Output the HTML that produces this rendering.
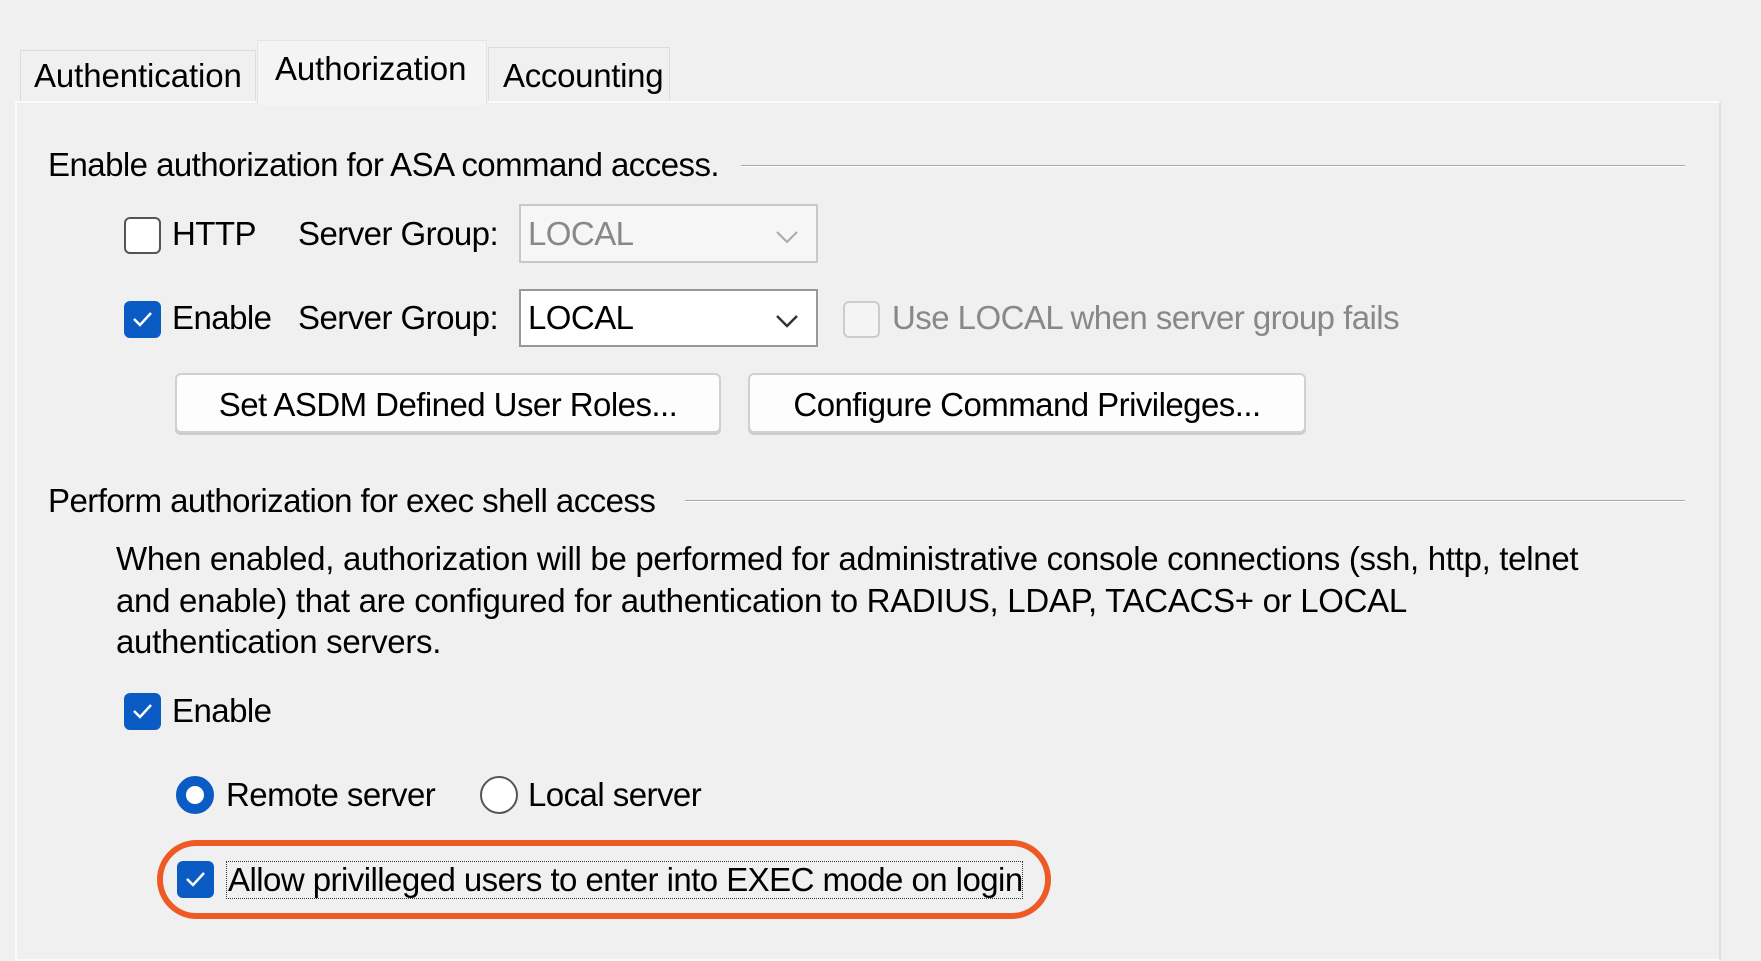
<!DOCTYPE html>
<html><head><meta charset="utf-8"><style>
*{margin:0;padding:0;box-sizing:border-box}
body{width:1761px;height:948px;background:#f0f0f0;position:relative;overflow:hidden;font-family:"Liberation Sans",sans-serif;font-size:33px;color:#000;letter-spacing:-0.55px}
.a{position:absolute;white-space:nowrap;line-height:1}
.tab{position:absolute;border:1px solid #dcdcdc;border-bottom:none;background:#f0f0f0}
.panel{position:absolute;left:15px;top:101px;width:1706px;height:860px;border:2px solid #fafafa;border-right-color:#e0e0e0;background:#f0f0f0}
.cb{position:absolute;width:37px;height:37px;border:2px solid #555;border-radius:6px;background:#fff}
.cbc{position:absolute;width:37px;height:37px;border-radius:6px;background:#0a5bc4}
.cbc svg{position:absolute;left:8px;top:9px}
.combo{position:absolute;border:2px solid #c8c8c8;background:#f6f6f6}
.btn{position:absolute;border:2px solid #d0d0d0;border-radius:6px;background:#fdfdfd;text-align:center;box-shadow:0 2px 0 #ccc}
.line{position:absolute;height:2px;background:#a8a8a8;border-bottom:1px solid #fff}
</style></head><body>
<div class="tab" style="left:20px;top:50px;width:236px;height:52px"></div>
<div class="tab" style="left:488px;top:47px;width:182px;height:55px"></div>
<div class="panel"></div>
<div class="tab" style="left:257px;top:40px;width:230px;height:65px;background:#f4f4f4;border-color:#e4e4e4"></div>
<div class="a" style="left:34px;top:59px;font-size:33px;letter-spacing:-0.1px">Authentication</div>
<div class="a" style="left:275px;top:52px;font-size:33px;letter-spacing:-0.1px">Authorization</div>
<div class="a" style="left:503px;top:59px;font-size:33px;letter-spacing:-0.3px">Accounting</div>

<div class="a" style="left:48px;top:148px">Enable authorization for ASA command access.</div>
<div class="line" style="left:741px;top:165px;width:944px"></div>

<div class="cb" style="left:124px;top:217px"></div>
<div class="a" style="left:172px;top:217px">HTTP</div>
<div class="a" style="left:298px;top:217px">Server Group:</div>
<div class="combo" style="left:519px;top:204px;width:299px;height:59px"></div>
<div class="a" style="left:528px;top:217px;color:#888">LOCAL</div>
<svg class="a" style="left:775px;top:230px" width="24" height="14"><path d="M2 2 L12 12 L22 2" fill="none" stroke="#aaa" stroke-width="2"/></svg>

<div class="cbc" style="left:124px;top:301px"><svg width="21" height="18"><path d="M2 9 L8 15 L19 3" fill="none" stroke="#fff" stroke-width="2.5"/></svg></div>
<div class="a" style="left:172px;top:301px">Enable</div>
<div class="a" style="left:298px;top:301px">Server Group:</div>
<div class="combo" style="left:519px;top:289px;width:299px;height:58px;background:#fff;border-color:#999"></div>
<div class="a" style="left:528px;top:301px">LOCAL</div>
<svg class="a" style="left:775px;top:314px" width="24" height="14"><path d="M2 2 L12 12 L22 2" fill="none" stroke="#333" stroke-width="2.5"/></svg>
<div class="cb" style="left:843px;top:301px;border-color:#ccc;background:#f4f4f4"></div>
<div class="a" style="left:892px;top:301px;color:#888">Use LOCAL when server group fails</div>

<div class="btn" style="left:175px;top:373px;width:546px;height:60px;padding-top:11px">Set ASDM Defined User Roles...</div>
<div class="btn" style="left:748px;top:373px;width:558px;height:60px;padding-top:11px">Configure Command Privileges...</div>

<div class="a" style="left:48px;top:484px">Perform authorization for exec shell access</div>
<div class="line" style="left:685px;top:500px;width:1000px"></div>

<div class="a" style="left:116px;top:538px;line-height:41.5px;font-size:33px;letter-spacing:-0.3px">When enabled, authorization will be performed for administrative console connections (ssh, http, telnet<br>and enable) that are configured for authentication to RADIUS, LDAP, TACACS+ or LOCAL<br>authentication servers.</div>

<div class="cbc" style="left:124px;top:693px"><svg width="21" height="18"><path d="M2 9 L8 15 L19 3" fill="none" stroke="#fff" stroke-width="2.5"/></svg></div>
<div class="a" style="left:172px;top:694px">Enable</div>

<div class="a" style="left:176px;top:776px;width:38px;height:38px;border-radius:50%;border:10px solid #0a5bc4;background:#fff"></div>
<div class="a" style="left:226px;top:778px">Remote server</div>
<div class="a" style="left:480px;top:776px;width:38px;height:38px;border-radius:50%;border:2px solid #555;background:#fff"></div>
<div class="a" style="left:528px;top:778px">Local server</div>

<div class="a" style="left:157px;top:840px;width:894px;height:79px;border:6px solid #ee5a24;border-radius:40px"></div>
<div class="cbc" style="left:177px;top:861px"><svg width="21" height="18"><path d="M2 9 L8 15 L19 3" fill="none" stroke="#fff" stroke-width="2.5"/></svg></div>
<div class="a" style="left:226px;top:861px;width:797px;height:38px;border:1px dotted #333"></div>
<div class="a" style="left:228px;top:863px">Allow privilleged users to enter into EXEC mode on login</div>
</body></html>
